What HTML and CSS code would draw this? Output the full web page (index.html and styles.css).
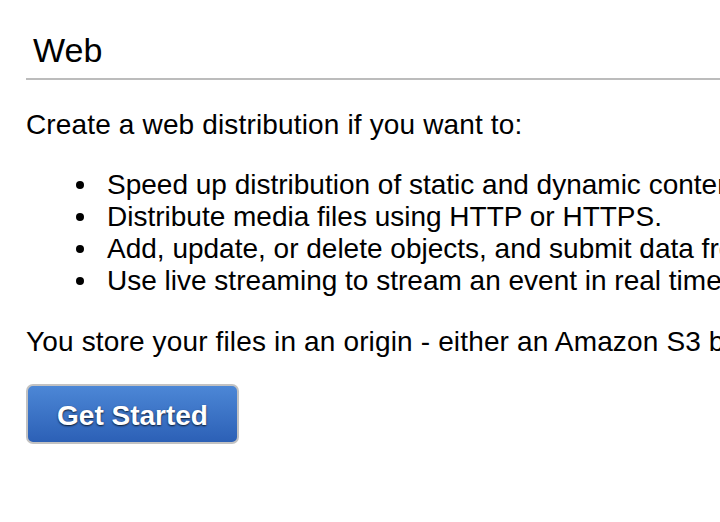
FILE: index.html
```html
<!DOCTYPE html>
<html>
<head>
<meta charset="utf-8">
<link rel="stylesheet" href="styles.css">
</head>
<body>
<div class="page">
  <h2 class="title">Web</h2>
  <p class="text">Create a web distribution if you want to:</p>
  <ul class="list">
    <li>Speed up distribution of static and dynamic content, for example, .html, .css, .php, and graphics files.</li>
    <li>Distribute media files using HTTP or HTTPS.</li>
    <li>Add, update, or delete objects, and submit data from web forms.</li>
    <li>Use live streaming to stream an event in real time.</li>
  </ul>
  <p class="text">You store your files in an origin - either an Amazon S3 bucket or a web server.</p>
  <button class="btn">Get Started</button>
</div>
</body>
</html>
```
FILE: styles.css
```css
html, body {
  margin: 0;
  padding: 0;
  background: #fff;
  overflow: hidden;
}
body {
  width: 720px;
  height: 522px;
  font-family: "Liberation Sans", Arial, sans-serif;
  color: #000;
}
.page {
  padding: 30px 0 0 26px;
  white-space: nowrap;
}
.title {
  margin: 0;
  font-size: 34px;
  font-weight: normal;
  line-height: 40px;
  padding: 0 0 8px 7px;
  border-bottom: 2px solid #bcbcbc;
}
.text {
  margin: 29px 0 0;
  font-size: 28px;
  line-height: 32px;
  letter-spacing: 0.15px;
}
.list {
  margin: 28px 0 0;
  padding: 0;
  list-style: none;
  font-size: 28px;
  line-height: 32px;
}
.list + .text {
  margin-top: 29px;
}
.list li::before {
  content: "";
  display: inline-block;
  width: 8px;
  height: 8px;
  border-radius: 50%;
  background: #000;
  margin: 0 23px 0 50px;
  vertical-align: 5px;
}
.btn {
  display: block;
  margin-top: 26px;
  width: 213px;
  height: 60px;
  box-sizing: border-box;
  border: 2px solid #c2c2c2;
  border-radius: 7px;
  background: linear-gradient(#4c87d6, #2c60b6);
  color: #fff;
  font-family: "Liberation Sans", Arial, sans-serif;
  font-weight: bold;
  font-size: 28px;
  text-shadow: 0 1px 2px rgba(0, 0, 0, 0.8);
  padding: 3px 0 0;
}
```
